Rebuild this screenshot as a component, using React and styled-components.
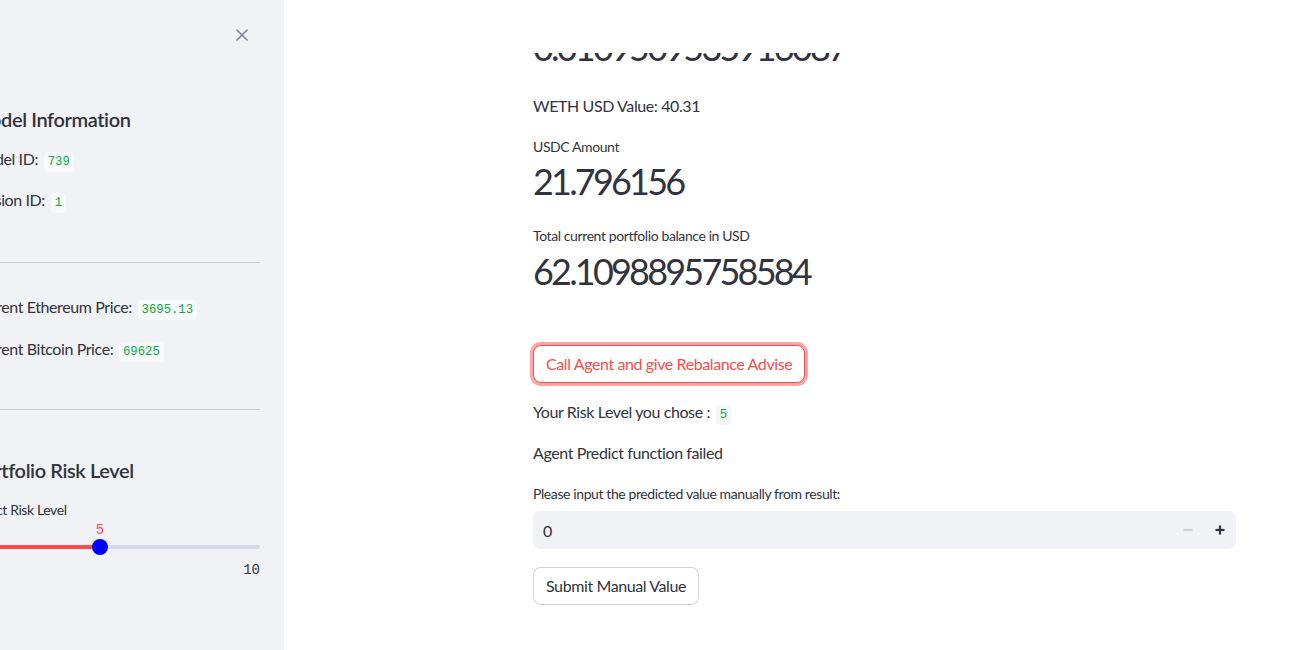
import React from 'react'
import styled, { createGlobalStyle } from 'styled-components'

const GlobalStyle = createGlobalStyle`
	html, body {
		margin: 0;
		padding: 0;
		background: #ffffff;
		color: #31333f;
		font-family: 'Lato', 'Noto Sans', sans-serif;
		letter-spacing: -0.025em;
		-webkit-font-smoothing: antialiased;
	}
	#root {
		height: 650px;
		overflow: hidden;
	}
`;

const Page = styled.div`
	display: flex;
	height: 650px;
	overflow: hidden;
`;

const Sidebar = styled.aside`
	flex: 0 0 336px;
	margin-left: -52px;
	background: #f0f2f6;
	padding: 0 24px;
	box-sizing: border-box;
	display: flex;
	flex-direction: column;
`;

const SidebarTop = styled.div`
	display: flex;
	justify-content: flex-end;
	height: 70px;
	align-items: center;
	padding-right: 6px;
`;

const CloseButton = styled.button`
	border: none;
	background: transparent;
	padding: 0;
	width: 24px;
	height: 24px;
	display: flex;
	align-items: center;
	justify-content: center;
	color: #808495;
	cursor: pointer;
`;

const Heading = styled.h3`
	margin: ${p => p.$mt || 0}px 0 0;
	font-size: 20px;
	font-weight: 600;
	line-height: 28px;
	color: #31333f;
	white-space: nowrap;
`;

const Text = styled.p`
	margin: ${p => p.$mt || 0}px 0 0;
	font-size: 16px;
	line-height: 24px;
	white-space: nowrap;
`;

const Code = styled.code`
	font-family: 'Liberation Mono', 'DejaVu Sans Mono', monospace;
	font-size: 12.25px;
	line-height: 1;
	letter-spacing: 0;
	color: #09ab3b;
	background: ${p => p.$side ? '#f8f9fb' : '#f6f7f9'};
	border-radius: 4px;
	padding: 3px 4px;
	margin-left: 2px;
`;

const Divider = styled.hr`
	margin: ${p => p.$mt || 0}px 0 0;
	border: none;
	border-top: 1px solid rgba(49, 51, 63, 0.2);
`;

const Label = styled.div`
	margin-top: ${p => p.$mt || 0}px;
	font-size: 14px;
	line-height: 20px;
	white-space: nowrap;
`;

const Slider = styled.div`
	margin-top: ${p => p.$mt || 0}px;
	display: flex;
	flex-direction: column;
`;

const ThumbValue = styled.div`
	font-family: 'Liberation Mono', 'DejaVu Sans Mono', monospace;
	font-size: 14px;
	line-height: 18px;
	letter-spacing: 0;
	color: #ff4b4b;
	padding-left: ${p => p.$at}px;
	transform: translateX(-50%);
	width: max-content;
`;

const Track = styled.div`
	position: relative;
	margin-top: 6px;
	height: 4px;
	border-radius: 2px;
	background: #d5dae5;
`;

const Fill = styled.div`
	height: 4px;
	border-radius: 2px;
	background: #ff4b4b;
`;

const Thumb = styled.div`
	position: absolute;
	top: -6px;
	width: 16px;
	height: 16px;
	margin-left: -8px;
	border-radius: 50%;
	background: #0000ff;
`;

const TickRow = styled.div`
	display: flex;
	justify-content: space-between;
	margin-top: 12px;
	font-family: 'Liberation Mono', 'DejaVu Sans Mono', monospace;
	font-size: 14px;
	line-height: 18px;
	letter-spacing: 0;
	color: #31333f;
`;

const Main = styled.main`
	flex: 1;
	position: relative;
	overflow: hidden;
	padding-left: 249px;
`;

const Header = styled.header`
	position: absolute;
	top: 0;
	left: 0;
	right: 0;
	height: 53px;
	background: #ffffff;
`;

const Column = styled.div`
	width: 703px;
	display: flex;
	flex-direction: column;
	align-items: flex-start;
`;

const MetricValue = styled.div`
	margin-top: ${p => p.$mt || 0}px;
	font-size: 36px;
	line-height: 43px;
	letter-spacing: -2.8px;
	color: #31333f;
	white-space: nowrap;
`;

const Button = styled.button`
	margin-top: ${p => p.$mt || 0}px;
	height: 38px;
	padding: 0 12px 1px;
	border-radius: 8px;
	background: #ffffff;
	font-family: inherit;
	font-size: 16px;
	letter-spacing: inherit;
	color: ${p => p.$active ? '#ff4b4b' : '#31333f'};
	border: 1px solid ${p => p.$active ? '#ff4b4b' : 'rgba(49, 51, 63, 0.2)'};
	box-shadow: ${p => p.$active ? '0 0 0 3px rgba(255, 75, 75, 0.5)' : 'none'};
	cursor: pointer;
	white-space: nowrap;
`;

const NumberInput = styled.div`
	margin-top: ${p => p.$mt || 0}px;
	align-self: stretch;
	height: 38px;
	border-radius: 8px;
	background: #f0f2f6;
	display: flex;
	align-items: center;
`;

const InputField = styled.input`
	flex: 1;
	border: none;
	background: transparent;
	font-family: inherit;
	font-size: 16px;
	color: #31333f;
	padding: 0 10px;
	outline: none;
`;

const Step = styled.button`
	width: 32px;
	height: 38px;
	border: none;
	background: transparent;
	display: flex;
	align-items: center;
	justify-content: center;
	color: ${p => p.$disabled ? '#cdd1d9' : '#31333f'};
	padding: 0;
`;

function CloseIcon() {
	return (
		<svg width="14" height="14" viewBox="0 0 14 14">
			<path d="M2 2 L12 12 M12 2 L2 12" stroke="currentColor" strokeWidth="1.6" strokeLinecap="round" />
		</svg>
	);
}

function StepIcon({ plus }) {
	return (
		<svg width="12" height="12" viewBox="0 0 12 12">
			<path d="M1.5 6 H10.5" stroke="currentColor" strokeWidth="2.2" />
			{plus && <path d="M6 1.5 V10.5" stroke="currentColor" strokeWidth="2.2" />}
		</svg>
	);
}

function RiskSlider({ min, max, value }) {
	const pct = ((value - min) / (max - min)) * 100;
	const at = Math.round(288 * pct / 100);
	return (
		<Slider $mt={1}>
			<ThumbValue $at={at * 2}>{value}</ThumbValue>
			<Track>
				<Fill style={{ width: `${pct}%` }} />
				<Thumb style={{ left: `${pct}%` }} />
			</Track>
			<TickRow>
				<span>{min}</span>
				<span>{max}</span>
			</TickRow>
		</Slider>
	);
}

export default function App() {
	return <>
		<GlobalStyle />
		<Page>
			<Sidebar>
				<SidebarTop>
					<CloseButton aria-label="Close sidebar"><CloseIcon /></CloseButton>
				</SidebarTop>
				<Heading $mt={35}>Model Information</Heading>
				<Text $mt={14}>Model ID: <Code $side>739</Code></Text>
				<Text $mt={17}>Version ID: <Code $side>1</Code></Text>
				<Divider $mt={50} />
				<Text $mt={32}>Current Ethereum Price: <Code $side>3695.13</Code></Text>
				<Text $mt={18}>Current Bitcoin Price: <Code $side>69625</Code></Text>
				<Divider $mt={48} />
				<Heading $mt={46}>Portfolio Risk Level</Heading>
				<Label $mt={16}>Select Risk Level</Label>
				<RiskSlider min={1} max={10} value={5} />
			</Sidebar>
			<Main>
				<Column>
					<MetricValue $mt={26}>0.0109509535916087</MetricValue>
					<Text $mt={25}>WETH USD Value: 40.31</Text>
					<Label $mt={19}>USDC Amount</Label>
					<MetricValue $mt={3}>21.796156</MetricValue>
					<Label $mt={23}>Total current portfolio balance in USD</Label>
					<MetricValue $mt={4}>62.1098895758584</MetricValue>
					<Button $mt={52} $active>Call Agent and give Rebalance Advise</Button>
					<Text $mt={17}>Your Risk Level you chose : <Code>5</Code></Text>
					<Text $mt={17}>Agent Predict function failed</Text>
					<Label $mt={19}>Please input the predicted value manually from result:</Label>
					<NumberInput $mt={7}>
						<InputField defaultValue="0" />
						<Step $disabled><StepIcon /></Step>
						<Step><StepIcon plus /></Step>
					</NumberInput>
					<Button $mt={18}>Submit Manual Value</Button>
				</Column>
				<Header />
			</Main>
		</Page>
	</>
}
